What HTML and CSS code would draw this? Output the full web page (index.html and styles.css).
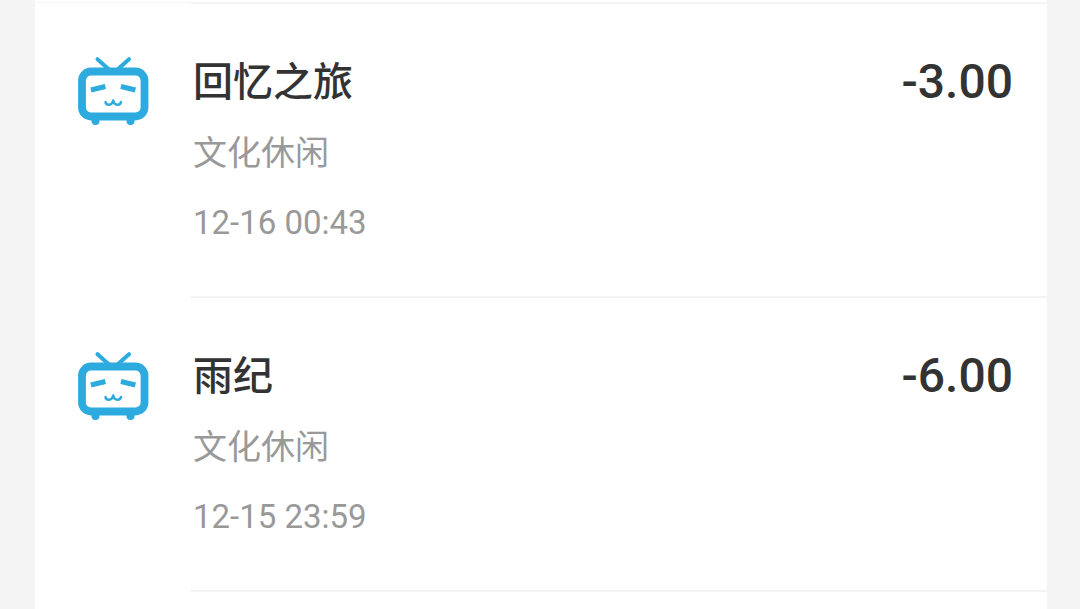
FILE: index.html
```html
<!DOCTYPE html>
<html lang="zh-CN">

<head>
    <meta charset="UTF-8">
    <meta name="viewport" content="width=device-width, initial-scale=1.0">
    <title>账单</title>
    <link rel="stylesheet" href="styles.css">
</head>

<body>

    <!-- tv logo, used by every row -->
    <svg class="sprite" aria-hidden="true">
        <symbol id="tv" viewBox="0 0 72 70">
            <g fill="none" stroke="#2dabdf" stroke-linecap="round" stroke-linejoin="round">
                <path d="M19.5 3.2L31 13.5M51 3.2L39.5 13.5" stroke-width="4" />
                <rect x="4" y="15.5" width="62.5" height="45" rx="9" stroke-width="7.8" />
                <path d="M27.5 46c.5 3.8 6.5 4 7.7-1.5c1.2 5.500 7.200 5.300 7.700 1.500" stroke-width="2.400" />
            </g>
            <g fill="#2dabdf">
                <path d="M12.300 31.500l14.500-3.400l1.200 4.900l-14.500 3.400z" />
                <path d="M43.500 28.100l14.500 3.400l-1.200 4.900l-14.500-3.400z" />
                <circle cx="17.500" cy="65" r="4" />
                <circle cx="52.500" cy="65" r="4" />
            </g>
        </symbol>
    </svg>

    <main class="bill-list">

        <article class="bill">
            <svg class="logo"><use href="#tv" /></svg>
            <div class="bill-body">
                <div class="bill-info">
                    <h2 class="name">回忆之旅</h2>
                    <p class="category">文化休闲</p>
                    <time class="date">12-16 00:43</time>
                </div>
                <span class="amount">-3.00</span>
            </div>
        </article>

        <article class="bill">
            <svg class="logo"><use href="#tv" /></svg>
            <div class="bill-body">
                <div class="bill-info">
                    <h2 class="name">雨纪</h2>
                    <p class="category">文化休闲</p>
                    <time class="date">12-15 23:59</time>
                </div>
                <span class="amount">-6.00</span>
            </div>
        </article>

    </main>

</body>

</html>
```

FILE: styles.css
```css
* {
    margin: 0;
    padding: 0;
    box-sizing: border-box;
}

body {
    background-color: #f4f4f4;
    padding: 0 33px 0 35px;
    font-family: Roboto, "Noto Sans CJK SC", sans-serif;
    color: #333;
}

.sprite {
    display: none;
}

.bill-list {
    min-height: 100vh;
    background-color: white;
}

.bill-list::before {
    content: "";
    display: block;
    height: 2px;
    border-bottom: 1px solid #f7f7f7;
}

.bill {
    display: flex;
}

.logo {
    width: 72px;
    height: 70px;
    margin: 53px 41px 0 43px;
    flex-shrink: 0;
}

.bill-body {
    flex: 1;
    display: flex;
    justify-content: space-between;
    align-items: flex-start;
    padding: 55px 34px 49px 2px;
    border-bottom: 2px solid #f3f3f3;
}

.bill:first-of-type .bill-body {
    border-top: 1px solid #f0f0f0;
}

.name {
    font-size: 40px;
    line-height: 48px;
    font-weight: 500;
}

.category,
.date {
    display: block;
    color: #999;
    line-height: 48px;
    margin-top: 22px;
}

.category {
    font-size: 34px;
}

.date {
    font-size: 33px;
}

.amount {
    font-size: 48px;
    line-height: 46px;
    font-weight: 500;
}
```
